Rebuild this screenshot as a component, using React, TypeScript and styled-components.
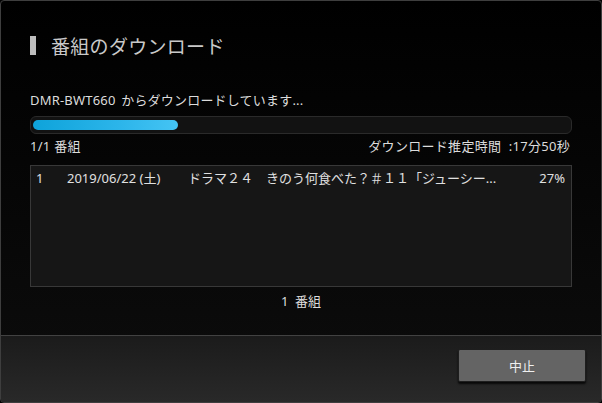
import React from "react";
import styled, { createGlobalStyle } from "styled-components";

const Global = createGlobalStyle`
  html, body { margin: 0; padding: 0; background: #000; }
  body { font-family: "Noto Sans", "Noto Sans CJK JP", sans-serif; }
`;

const Dialog = styled.div`
  width: 602px;
  height: 403px;
  box-sizing: border-box;
  border: 1px solid #3e3e3e;
  border-radius: 4px;
  overflow: hidden;
  display: flex;
  flex-direction: column;
  background: linear-gradient(#000 0%, #050505 40%, #0d0d0d 100%);
`;

const Body = styled.div`
  flex: 1;
  display: flex;
  flex-direction: column;
  padding: 0 29px 0 29px;
`;

const TitleRow = styled.div`
  display: flex;
  align-items: center;
  gap: 15px;
  margin-top: 31px;
  height: 26px;
`;

const TitleBar = styled.span`
  width: 6px;
  height: 19px;
  background: #bdbdbd;
`;

const Title = styled.h1`
  margin: 0;
  font-family: "Noto Sans CJK JP", sans-serif;
  font-size: 19px;
  font-weight: 400;
  color: #c9c9c9;
  letter-spacing: 0.3px;
`;

const Status = styled.div`
  margin-top: 33px;
  font-size: 13px;
  color: #dcdcdc;
  line-height: 18px;
  word-spacing: 2px;
  letter-spacing: 0.2px;
`;

const Track = styled.div`
  margin-top: 7px;
  height: 12px;
  border-radius: 6px;
  background: #121212;
  border: 1px solid #2a2a2a;
  padding: 2px 2px;
  box-sizing: content-box;
  display: flex;
  align-items: center;
`;

const Fill = styled.div`
  height: 10px;
  border-radius: 5px;
  background: linear-gradient(90deg, #0ea3da 0%, #2cb5ea 60%, #45c4f4 100%);
`;

const InfoRow = styled.div`
  display: flex;
  justify-content: space-between;
  margin-top: 2px;
  font-size: 13px;
  color: #dcdcdc;
  line-height: 20px;
  padding-right: 2px;
  white-space: pre;
  letter-spacing: 0.3px;
`;

const List = styled.div`
  margin-top: 9px;
  height: 122px;
  border: 1px solid #383838;
  background: #161616;
  box-sizing: border-box;
`;

const Row = styled.div`
  display: grid;
  grid-template-columns: 31px 121px 78px 1fr 50px;
  font-size: 13px;
  color: #e0e0e0;
  line-height: 24px;
  padding: 0 6px 0 5px;
`;

const Cell = styled.span<{ $right?: boolean }>`
  white-space: nowrap;
  overflow: hidden;
  text-align: ${(p) => (p.$right ? "right" : "left")};
`;

const Count = styled.div`
  text-align: center;
  font-size: 13px;
  color: #dcdcdc;
  margin-top: 4px;
  line-height: 20px;
  white-space: pre;
`;

const Footer = styled.div`
  height: 67px;
  border-top: 1px solid #424242;
  background: linear-gradient(#1b1b1b, #292929);
  display: flex;
  justify-content: flex-end;
  align-items: flex-start;
  padding: 13px 15px 0 0;
  box-sizing: border-box;
`;

const Button = styled.button`
  width: 128px;
  height: 33px;
  background: #646464;
  border: 1px solid #1e1e1e;
  border-radius: 2px;
  box-shadow: 0 2px 2px rgba(0, 0, 0, 0.8);
  color: #efefef;
  font-family: "Noto Sans CJK JP", sans-serif;
  font-size: 13px;
  padding: 0;
`;

export default function App() {
  const progress = 27;
  return (
    <>
      <Global />
      <Dialog>
        <Body>
          <TitleRow>
            <TitleBar />
            <Title>番組のダウンロード</Title>
          </TitleRow>
          <Status>DMR-BWT660 からダウンロードしています...</Status>
          <Track>
            <Fill style={{ width: `${progress}%` }} />
          </Track>
          <InfoRow>
            <span>1/1 番組</span>
            <span>ダウンロード推定時間  :17分50秒</span>
          </InfoRow>
          <List>
            <Row>
              <Cell>1</Cell>
              <Cell>2019/06/22 (土)</Cell>
              <Cell>ドラマ２４</Cell>
              <Cell>きのう何食べた？＃１１「ジューシー...</Cell>
              <Cell $right>27%</Cell>
            </Row>
          </List>
          <Count>1  番組</Count>
        </Body>
        <Footer>
          <Button>中止</Button>
        </Footer>
      </Dialog>
    </>
  );
}
